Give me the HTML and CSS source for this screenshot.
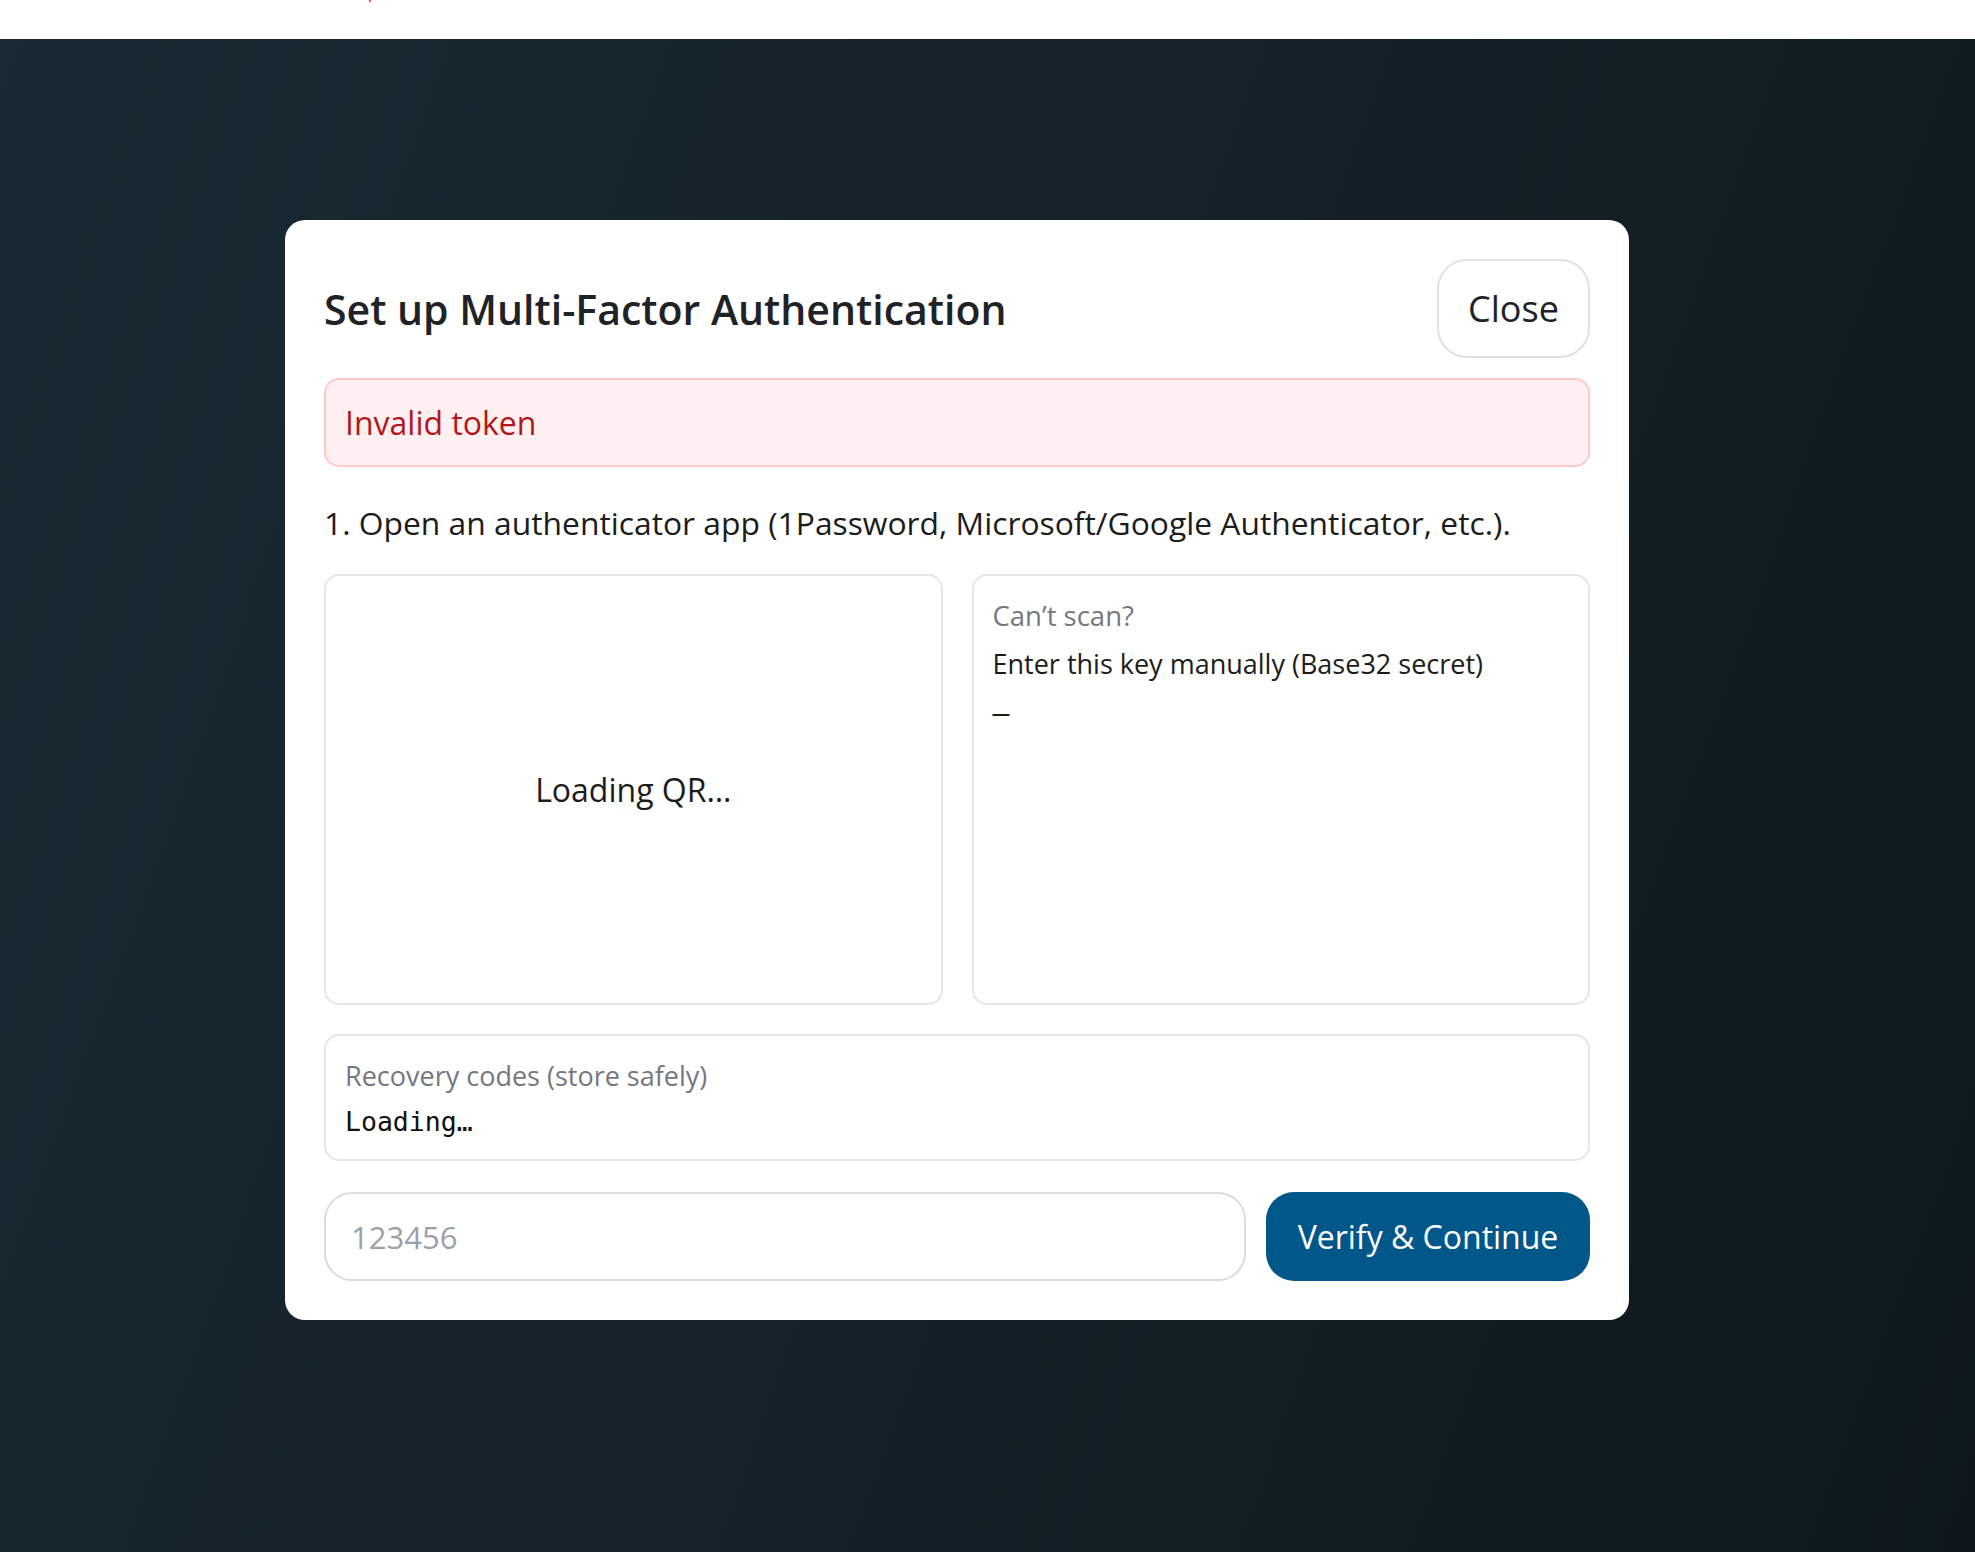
FILE: index.html
```html
<!DOCTYPE html>
<html lang="en">
<head>
<meta charset="utf-8">
<title>Set up Multi-Factor Authentication</title>
<link rel="stylesheet" href="styles.css">
</head>
<body>
<div class="topbar"><span class="topbar-mark"></span></div>
<div class="overlay">
  <div class="modal" role="dialog" aria-labelledby="mfa-title">
    <div class="modal-head">
      <h2 id="mfa-title" class="modal-title">Set up Multi-Factor Authentication</h2>
      <button class="btn btn-ghost" type="button">Close</button>
    </div>
    <div class="alert">Invalid token</div>
    <p class="step">1. Open an authenticator app (1Password, Microsoft/Google Authenticator, etc.).</p>
    <div class="setup-grid">
      <div class="card card-qr">Loading QR…</div>
      <div class="card">
        <div class="muted">Can’t scan?</div>
        <div class="key-label">Enter this key manually (Base32 secret)</div>
        <code class="secret">—</code>
      </div>
    </div>
    <div class="card recovery">
      <div class="muted">Recovery codes (store safely)</div>
      <pre class="codes">Loading…</pre>
    </div>
    <div class="verify-row">
      <input class="token-input" type="text" placeholder="123456">
      <button class="btn btn-primary" type="button">Verify &amp; Continue</button>
    </div>
  </div>
</div>
</body>
</html>
```
FILE: styles.css
```css
* { box-sizing: border-box; }

html, body {
  margin: 0;
  padding: 0;
  background: #ffffff;
}

body {
  font-family: "Segoe UI", "Open Sans", "Noto Sans", sans-serif;
  color: #1c1c1c;
  height: 1552px;
  display: flex;
  flex-direction: column;
}

.topbar {
  height: 39px;
  background: #ffffff;
  padding-left: 369px;
}

.topbar-mark {
  display: block;
  width: 2px;
  height: 2px;
  background: #e8564f;
}

.overlay {
  flex: 1;
  background: linear-gradient(110deg, #192a32 0%, #142229 50%, #0e181c 100%);
  padding: 181px 0 0 285px;
}

.modal {
  width: 1344px;
  height: 1100px;
  background: #ffffff;
  border-radius: 20px;
  padding: 39px;
  display: flex;
  flex-direction: column;
}

.modal-head {
  display: flex;
  align-items: center;
  justify-content: space-between;
  height: 99px;
}

.modal-title {
  margin: 0;
  font-size: 41px;
  font-weight: 600;
  color: #1f2226;
  letter-spacing: 0;
}

.btn {
  font-family: inherit;
  cursor: pointer;
}

.btn-ghost {
  height: 99px;
  width: 153px;
  background: #ffffff;
  border: 2px solid #e1e1de;
  border-radius: 30px;
  font-size: 36px;
  color: #1f2226;
  padding: 0;
}

.alert {
  margin-top: 20px;
  height: 89px;
  display: flex;
  align-items: center;
  padding: 0 19px;
  background: #fef0f0;
  border: 2px solid #fdc9c9;
  border-radius: 15px;
  color: #b4161b;
  font-size: 32px;
}

.step {
  margin: 32px 0 28px;
  font-size: 31.8px;
  line-height: 47px;
  color: #1c1c1c;
}

.setup-grid {
  display: grid;
  grid-template-columns: 1fr 1fr;
  gap: 29px;
  height: 431px;
}

.card {
  border: 2px solid #e5e6ea;
  border-radius: 15px;
  padding: 20px 19px;
  background: #ffffff;
}

.card-qr {
  display: flex;
  align-items: center;
  justify-content: center;
  font-size: 32px;
  color: #1c1c1c;
}

.muted {
  color: #737881;
  font-size: 27.5px;
  line-height: 40px;
}

.key-label {
  margin-top: 8px;
  font-size: 27px;
  line-height: 40px;
  color: #1c1c1c;
}

.secret {
  display: block;
  margin-top: 10px;
  font-family: "DejaVu Sans Mono", "Liberation Mono", monospace;
  font-size: 28px;
  line-height: 40px;
  color: #1c1c1c;
}

.recovery {
  margin-top: 29px;
  height: 127px;
}

.recovery .muted {
  font-size: 27px;
}

.codes {
  margin: 6px 0 0;
  font-family: "DejaVu Sans Mono", "Liberation Mono", monospace;
  font-size: 26.5px;
  line-height: 40px;
  color: #111111;
}

.verify-row {
  margin-top: 31px;
  display: flex;
  gap: 20px;
  height: 89px;
}

.token-input {
  flex: 1;
  height: 89px;
  border: 2px solid #dcdcd8;
  border-radius: 28px;
  padding: 0 25px;
  font-family: inherit;
  font-size: 31px;
  color: #1c1c1c;
  background: #ffffff;
  outline: none;
}

.token-input::placeholder {
  color: #9aa1ad;
}

.btn-primary {
  width: 324px;
  height: 89px;
  border: none;
  border-radius: 28px;
  background: #02578a;
  color: #ffffff;
  font-size: 32px;
  padding: 0;
}
```
